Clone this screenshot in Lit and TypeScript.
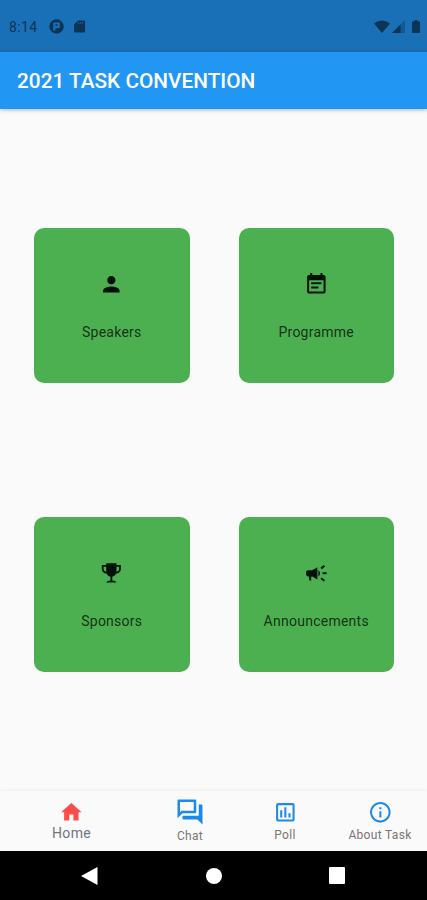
import { LitElement, html, css, svg } from "lit";
import { customElement } from "lit/decorators.js";

const icons = {
  person: "M12 12c2.21 0 4-1.79 4-4s-1.79-4-4-4-4 1.79-4 4 1.79 4 4 4zm0 2c-2.67 0-8 1.34-8 4v2h16v-2c0-2.66-5.33-4-8-4z",
  event: "M17 10H7v2h10v-2zm2-7h-1V1h-2v2H8V1H6v2H5c-1.11 0-1.99.9-1.99 2L3 19c0 1.1.89 2 2 2h14c1.1 0 2-.9 2-2V5c0-1.1-.9-2-2-2zm0 16H5V8h14v11zm-5-5H7v2h7v-2z",
  trophy: "M7 2.3h10v1.6h4.3v3.6c0 2.7-2 4.5-4.8 5-.8 1.6-2 2.5-3.6 2.8v3.6c2 .1 3.6.7 4.1 2.1H7c.5-1.4 2.1-2 4.1-2.1v-3.6c-1.6-.3-2.8-1.2-3.6-2.8-2.8-.5-4.8-2.3-4.8-5V3.900H7V2.3zM4.500 5.700v1.800c0 1.500.8 2.500 2.500 3V5.700H4.500zm12.500 0v4.800c1.700-.5 2.500-1.500 2.500-3V5.700H17z",
  campaign: "M18 11v2h4v-2h-4zm-2 6.61c.96.71 2.21 1.65 3.2 2.39.4-.53.8-1.07 1.2-1.6-.99-.74-2.24-1.68-3.2-2.4-.4.54-.8 1.08-1.2 1.61zM20.4 5.6c-.4-.53-.8-1.07-1.2-1.6-.99.74-2.24 1.68-3.2 2.4.4.53.8 1.07 1.2 1.6.96-.72 2.21-1.65 3.2-2.4zM4 9c-1.1 0-2 .9-2 2v2c0 1.1.9 2 2 2h1v4h2v-4h1l5 3V6L8 9H4zm11.5 3c0-1.33-.58-2.53-1.5-3.35v6.69c.92-.81 1.5-2.01 1.5-3.34z",
  home: "M10 20v-6h4v6h5v-8h3L12 3 2 12h3v8z",
  forum: "M15 4v7H5.17L4 12.17V4h11m1-2H3c-.55 0-1 .45-1 1v14l4-4h10c.55 0 1-.45 1-1V3c0-.55-.45-1-1-1zm5 4h-2v9H6v2c0 .55.45 1 1 1h11l4 4V7c0-.55-.45-1-1-1z",
  poll: "M19 3H5c-1.1 0-2 .9-2 2v14c0 1.1.9 2 2 2h14c1.1 0 2-.9 2-2V5c0-1.1-.9-2-2-2zm0 16H5V5h14v14zM7 10h2v7H7zm4-3h2v10h-2zm4 6h2v4h-2z",
  info: "M11 7h2v2h-2zm0 4h2v6h-2zm1-9C6.48 2 2 6.48 2 12s4.48 10 10 10 10-4.48 10-10S17.52 2 12 2zm0 18c-4.41 0-8-3.59-8-8s3.59-8 8-8 8 3.59 8 8-3.59 8-8 8z",
};

const icon = (d: string) =>
  html`<svg class="icon" viewBox="0 0 24 24">${svg`<path d=${d}></path>`}</svg>`;

const cards = [
  ["Speakers", icons.person],
  ["Programme", icons.event],
  ["Sponsors", icons.trophy],
  ["Announcements", icons.campaign],
];

const tabs = [
  ["Home", icons.home, "active"],
  ["Chat", icons.forum, "chat"],
  ["Poll", icons.poll, "poll"],
  ["About Task", icons.info, "about"],
];

@customElement("app-root")
export class AppRoot extends LitElement {
  static styles = css`
    :host {
      display: flex;
      flex-direction: column;
      width: 427px;
      height: 900px;
      overflow: hidden;
      background: #fafafa;
      font-family: Roboto, sans-serif;
    }
    .status {
      display: flex;
      align-items: center;
      height: 51.5px;
      box-sizing: border-box;
      padding: 2px 7px 0 9px;
      background: #1a70b7;
      color: #0c3454;
      font-size: 14px;
      letter-spacing: 0.35px;
      flex: none;
    }
    .status svg { display: block; fill: currentColor; }
    .app-dot { margin-left: 12px; }
    .sd { margin-left: 10px; }
    .wifi { margin-left: auto; }
    .signal { margin-left: 2px; }
    .battery { margin-left: 7px; }
    .bar {
      display: flex;
      align-items: center;
      height: 57.5px;
      flex: none;
      box-sizing: border-box;
      padding: 1px 17px 0;
      background: #2196f3;
      color: #fff;
      font-size: 20.8px;
      font-weight: 500;
      white-space: nowrap;
      box-shadow: 0 1px 4px rgba(0, 0, 0, 0.28);
    }
    .grid {
      flex: 1;
      display: grid;
      grid-template-columns: 155.5px 155.5px;
      grid-template-rows: 155px 155px;
      column-gap: 49px;
      row-gap: 134.3px;
      padding: 118.8px 0 0 34px;
    }
    .card {
      display: flex;
      flex-direction: column;
      align-items: center;
      box-sizing: border-box;
      padding-top: 44px;
      border-radius: 10px;
      background: #4caf50;
      color: rgba(0, 0, 0, 0.74);
      font-size: 14px;
      line-height: 20px;
      letter-spacing: 0.25px;
    }
    .icon { display: block; width: 24.7px; height: 24.7px; fill: currentColor; }
    .card .icon { fill: #05120a; margin-bottom: 25.6px; }
    .tabs {
      display: flex;
      height: 60px;
      flex: none;
      background: #fafafa;
      box-shadow: 0 -1px 3px rgba(0, 0, 0, 0.05);
    }
    .tab {
      flex: 1;
      display: flex;
      flex-direction: column;
      align-items: center;
      box-sizing: border-box;
      padding: 9px 0 0 1px;
      color: #7b7675;
      font-size: 12px;
      line-height: 16px;
      letter-spacing: 0.32px;
      white-space: nowrap;
    }
    .tab .icon { fill: #1e8ae8; margin-bottom: 2px; }
    .tab.active { flex: 1.5; font-size: 14px; color: #6c7780; }
    .tab.active .icon { fill: #fb4b4b; margin-bottom: 0; }
    .tab.chat { padding-top: 6px; }
    .tab.chat .icon { width: 30px; height: 30px; margin-bottom: 1px; }
    .system {
      display: flex;
      align-items: center;
      height: 49px;
      flex: none;
      box-sizing: border-box;
      padding-left: 81px;
      gap: 108px;
      background: #000;
    }
    .system svg { display: block; fill: #fff; }
    .system .recent { margin-left: -1px; }
  `;

  render() {
    return html`
      <div class="status">
        <span>8:14</span>
        <svg class="app-dot" width="15" height="15" viewBox="0 0 15 15"><path fill-rule="evenodd" d="M7.5 .3a7.200 7.200 0 1 1 0 14.400a7.200 7.200 0 0 1 0-14.400zM4.200 3.500v8h2.300v-2.500h4.300V3.500zM6.500 5.300h2v1.800h-2z"></path></svg>
        <svg class="sd" width="11" height="13" viewBox="0 0 11 13"><path fill-rule="evenodd" d="M4 .5h6q1 0 1 1v10q0 1-1 1H1q-1 0-1-1V4.500zM4.300 2v1.700h.8V2zm2 0v1.700h.8V2zm2 0v1.700h.8V2z"></path></svg>
        <svg class="wifi" width="16" height="13" viewBox="0 0 16 13"><path d="M0 3.500Q8-2.500 16 3.500L8 13z"></path></svg>
        <svg class="signal" width="13" height="13" viewBox="0 0 13 13"><path opacity=".4" d="M13 0v13H0z"></path><path d="M8.500 4.500V13H0z"></path></svg>
        <svg class="battery" width="8" height="13" viewBox="0 0 8 13"><path d="M2.500 0h3v1.300H7q1 0 1 1V12q0 1-1 1H1q-1 0-1-1V2.300q0-1 1-1h1.500z"></path></svg>
      </div>
      <div class="bar">2021 TASK CONVENTION</div>
      <div class="grid">
        ${cards.map(([label, d]) => html`<div class="card">${icon(d)}<span>${label}</span></div>`)}
      </div>
      <div class="tabs">
        ${tabs.map(([label, d, cls]) => html`<div class="tab ${cls}">${icon(d)}<span>${label}</span></div>`)}
      </div>
      <div class="system">
        <svg width="17" height="18" viewBox="0 0 17 18"><path d="M16.500 0v18L0 9z"></path></svg>
        <svg width="16" height="16" viewBox="0 0 16 16"><circle cx="8" cy="8" r="8"></circle></svg>
        <svg class="recent" width="16" height="17" viewBox="0 0 16 17"><rect width="16" height="17" rx="1"></rect></svg>
      </div>
    `;
  }
}
